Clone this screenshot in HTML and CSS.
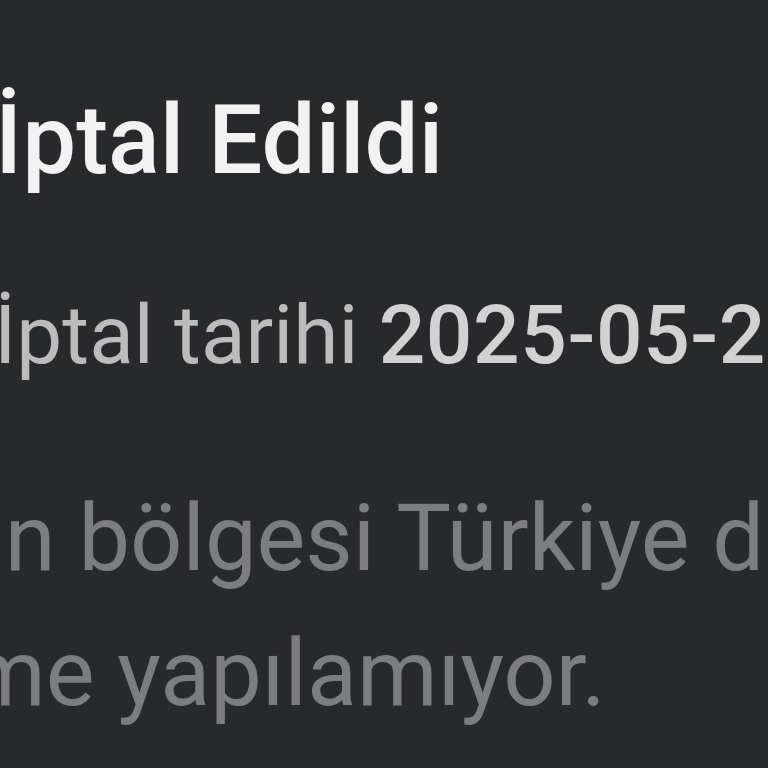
FILE: index.html
```html
<!DOCTYPE html>
<html lang="tr">
<head>
<meta charset="utf-8">
<title>İptal Edildi</title>
<link rel="stylesheet" href="styles.css">
</head>
<body>
<div class="card">
  <h1 class="title">İptal Edildi</h1>
  <p class="meta">İptal tarihi <span class="date">2025-05-21</span></p>
  <p class="desc">
    <span class="line first"><span class="cut">Hesab</span>ın bölgesi Türkiye dışında olduğu için</span>
    <span class="line second"><span class="cut">yenile</span>me yapılamıyor.</span>
  </p>
</div>
</body>
</html>
```
FILE: styles.css
```css
html, body {
  margin: 0;
  padding: 0;
  background: #28292d;
  overflow: hidden;
  width: 768px;
  height: 768px;
}
.card {
  font-family: Roboto, "Noto Sans", sans-serif;
  padding-top: 80px;
  white-space: nowrap;
}
.title {
  margin: 0 0 0 -5px;
  font-size: 96px;
  line-height: 120px;
  font-weight: 500;
  color: #f2f2f2;
}
.meta {
  margin: 86px 0 0 -6px;
  font-size: 82px;
  line-height: 98px;
  font-weight: 400;
  color: #bcbcbd;
}
.date {
  font-weight: 500;
  color: #d2d2d3;
  letter-spacing: 0.6px;
}
.desc {
  margin: 87px 0 0 0;
  font-size: 92px;
  line-height: 135px;
  font-weight: 400;
  color: #7c7d80;
}
.line {
  display: block;
}
.first {
  margin-left: -18px;
}
.second {
  margin-left: -35px;
}
.cut {
  display: inline-block;
  width: 0;
  direction: rtl;
}
```
